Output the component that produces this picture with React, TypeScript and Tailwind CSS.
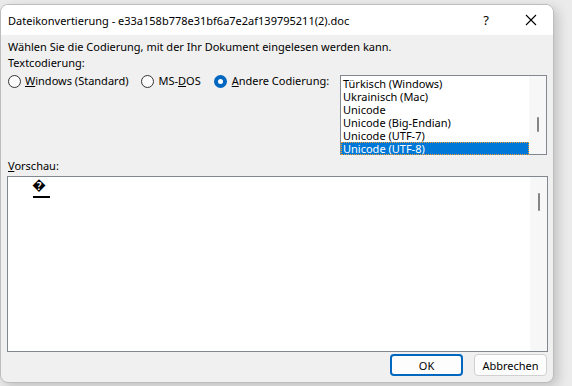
import React from "react";

const font = { fontFamily: '"Noto Sans", "Open Sans", sans-serif' };

function Radio({ checked }: { checked?: boolean }) {
  if (checked) {
    return (
      <span className="w-[13px] h-[13px] rounded-full bg-[#0067c0] flex items-center justify-center shrink-0">
        <span className="w-[5px] h-[5px] rounded-full bg-white" />
      </span>
    );
  }
  return <span className="block w-[13px] h-[13px] rounded-full border border-[#333] bg-[#fbfbfb] shrink-0" />;
}

export default function App() {
  const items = [
    "Türkisch (Windows)",
    "Ukrainisch (Mac)",
    "Unicode",
    "Unicode (Big-Endian)",
    "Unicode (UTF-7)",
    "Unicode (UTF-8)",
  ];
  return (
    <div className="w-[572px] h-[386px] bg-[#ebebeb] pt-[4px] overflow-hidden text-black" style={font}>
      <div className="w-[554px] h-[379px] rounded-[8px] border border-[#bdbdbd] bg-[#f0f0f0] overflow-hidden flex flex-col shadow-[4px_4px_12px_rgba(0,0,0,0.18)]">
        {/* title bar */}
        <div className="h-[30px] bg-white flex items-center pl-[7px] shrink-0">
          <span className="text-[11px] leading-none">Dateikonvertierung - e33a158b778e31bf6a7e2af139795211(2).doc</span>
          <span className="ml-auto text-[13px] leading-none mr-[36px]">?</span>
          <svg width="12" height="12" viewBox="0 0 12 12" className="mr-[16px]">
            <path d="M1 1 L11 11 M11 1 L1 11" stroke="#000" strokeWidth="1.1" />
          </svg>
        </div>
        {/* body */}
        <div className="flex-1 flex flex-col pl-[7px] pr-[4px] pt-[4px] text-[11px] leading-[16px] whitespace-nowrap">
          <div>Wählen Sie die Codierung, mit der Ihr Dokument eingelesen werden kann.</div>
          <div>Textcodierung:</div>
          <div className="flex items-start mt-[2px]">
            <div className="flex items-center h-[16px]">
              <Radio />
              <span className="ml-[4px]"><u>W</u>indows (Standard)</span>
              <span className="ml-[13px]"><Radio /></span>
              <span className="ml-[4px]">MS-<u>D</u>OS</span>
              <span className="ml-[13px]"><Radio checked /></span>
              <span className="ml-[5px]"><u>A</u>ndere Codierung:</span>
            </div>
            <div className="ml-auto mr-[2px] mt-[2px] w-[207px] h-[80px] border border-[#828790] bg-white flex">
              <div className="flex-1 flex flex-col pt-[1px]">
                {items.map((it, i) => (
                  <div
                    key={it}
                    className={
                      i === 5
                        ? "h-[13px] leading-[13px] pl-[2px] bg-[#0078d7] text-white outline-1 outline-dotted outline-[#f0a030] -outline-offset-1"
                        : "h-[13px] leading-[13px] pl-[2px]"
                    }
                  >
                    {it}
                  </div>
                ))}
              </div>
              <div className="w-[17px] bg-[#f7f7f7] flex justify-center pt-[41px]">
                <div className="w-[2px] h-[15px] bg-[#858585] rounded" />
              </div>
            </div>
          </div>
          <div className="mt-[3px]"><u>V</u>orschau:</div>
          <div className="ml-[-1px] mr-[1px] mt-[2px] h-[176px] border border-[#828790] bg-white flex">
            <div className="flex-1">
              <div className="pl-[24px] text-[14px] leading-[15px] font-bold">�</div>
              <div className="ml-[25px] mt-[4px] w-[17px] h-[2px] bg-black" />
            </div>
            <div className="w-[17px] bg-[#f7f7f7] flex justify-center pt-[16px]">
              <div className="w-[2px] h-[18px] bg-[#858585] rounded" />
            </div>
          </div>
          <div className="flex justify-end mt-[2px] mr-[2px] gap-[11px]">
            <button className="w-[73px] h-[22px] rounded-[4px] border-2 border-[#0067c0] bg-[#fdfdfd] text-[11px] leading-none">OK</button>
            <button className="w-[73px] h-[22px] rounded-[4px] border border-[#d0d0d0] bg-[#fdfdfd] text-[11px] leading-none">Abbrechen</button>
          </div>
        </div>
      </div>
    </div>
  );
}
